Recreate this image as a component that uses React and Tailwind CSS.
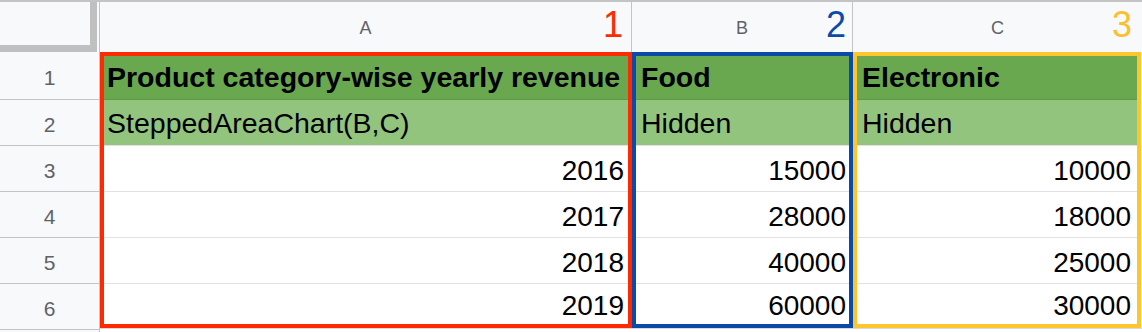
import React from "react";

const rowsA = ["2016", "2017", "2018", "2019"];
const rowsB = ["15000", "28000", "40000", "60000"];
const rowsC = ["10000", "18000", "25000", "30000"];

function DataColumn({ boxClass, title, sub, values, padL, padR }) {
  return (
    <div className={`flex flex-col h-[276px] border-4 ${boxClass}`}>
      <div className={`h-[44px] flex items-center bg-[#6aa84f] border-b border-[#5f9a46] font-bold text-[28.5px] ${padL}`}>
        <span className="whitespace-nowrap">{title}</span>
      </div>
      <div className={`h-[46px] flex items-center pt-[2px] bg-[#93c47d] border-b border-[#e2e2e2] text-[28.5px] ${padL}`}>
        <span className="whitespace-nowrap">{sub}</span>
      </div>
      {values.map((v, i) => (
        <div
          key={v}
          className={`flex items-center justify-end pt-[4px] bg-white text-[28px] ${padR} ${
            i === values.length - 1 ? "h-[40px]" : "h-[46px] border-b border-[#e2e2e2]"
          }`}
        >
          <span>{v}</span>
        </div>
      ))}
    </div>
  );
}

export default function App() {
  return (
    <div className="w-[1142px] h-[332px] overflow-hidden bg-white font-['Liberation_Sans',Arial,Helvetica,sans-serif] text-black flex flex-col">
      {/* header row */}
      <div className="flex h-[52px] border-t-2 border-[#c4c4c4] bg-[#f8f9fa] text-[#5f6368]">
        <div className="w-[100px] flex border-r border-[#c4c4c4]">
          <div className="w-[97px] h-[50px] border-r-[7px] border-b-[7px] border-[#c0c0c0] bg-[#f8f9fa]" />
        </div>
        <div className="relative w-[532px] flex items-center justify-center border-r border-[#c4c4c4] text-[18px] pt-[2px]">
          A
          <span className="absolute right-[8px] top-[5px] text-[36px] leading-none text-[#ff2a00]">1</span>
        </div>
        <div className="relative w-[221px] flex items-center justify-center border-r border-[#c4c4c4] text-[18px] pt-[2px]">
          B
          <span className="absolute right-[6px] top-[5px] text-[36px] leading-none text-[#0b4aa8]">2</span>
        </div>
        <div className="relative flex-1 flex items-center justify-center text-[18px] pt-[2px]">
          C
          <span className="absolute right-[10px] top-[5px] text-[36px] leading-none text-[#fbc02d]">3</span>
        </div>
      </div>

      {/* body */}
      <div className="flex flex-1 leading-none">
        <div className="w-[100px] flex flex-col bg-[#f8f9fa] border-r border-[#c4c4c4] text-[21px] text-[#5f6368]">
          {[1, 2, 3, 4, 5, 6].map((n) => (
            <div
              key={n}
              className={`flex items-center justify-center pt-[3px] border-b border-[#c4c4c4] ${
                n === 1 ? "h-[48px]" : "h-[46px]"
              }`}
            >
              {n}
            </div>
          ))}
        </div>
        <div className="flex flex-col w-[532px]">
          <DataColumn
            boxClass="border-[#ff2a00]"
            title="Product category-wise yearly revenue"
            sub="SteppedAreaChart(B,C)"
            values={rowsA}
            padL="pl-[3px]"
            padR="pr-[4px]"
          />
          <div className="border-t border-[#d9d9d9] flex-1" />
        </div>
        <div className="flex flex-col w-[221px]">
          <DataColumn
            boxClass="border-[#0b4aa8]"
            title="Food"
            sub="Hidden"
            values={rowsB}
            padL="pl-[5px]"
            padR="pr-[3px]"
          />
          <div className="border-t border-[#d9d9d9] flex-1" />
        </div>
        <div className="flex flex-col w-[288px]">
          <DataColumn
            boxClass="border-[#fdc62e]"
            title="Electronic"
            sub="Hidden"
            values={rowsC}
            padL="pl-[5px]"
            padR="pr-[6px]"
          />
          <div className="border-t border-[#d9d9d9] flex-1" />
        </div>
        <div className="flex-1 flex flex-col">
          <div className="h-[276px]" />
          <div className="border-t border-[#d9d9d9] flex-1" />
        </div>
      </div>
    </div>
  );
}
